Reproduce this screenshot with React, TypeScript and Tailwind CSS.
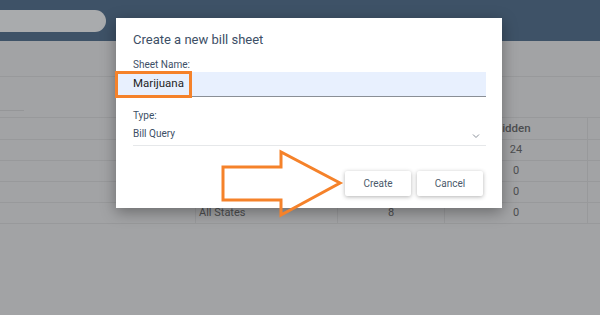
import React from 'react';

const rows = [
  { state: '', count: '', hidden: '24' },
  { state: '', count: '', hidden: '0' },
  { state: '', count: '', hidden: '0' },
  { state: 'All States', count: '8', hidden: '0' },
];

export default function App() {
  return (
    <div className="relative w-[600px] h-[315px] overflow-hidden bg-[#a2a3a5] font-['Roboto',sans-serif]">
      {/* Dimmed page behind the dialog */}
      <header className="h-[41px] bg-[#3e5267] flex items-center">
        <div className="ml-[-20px] w-[126px] h-[22px] rounded-full bg-[#a9abad]" />
      </header>
      <div className="h-[36px] border-b border-[#98999b]" />
      <div className="h-[40px] flex items-end">
        <div className="w-[24px] border-b border-[#959698] mb-[6px]" />
      </div>
      <div className="border-t border-[#98999b] text-[11px] text-[#4d4e50]">
        <div className="flex h-[22px] border-b border-[#98999b]">
          <div className="w-[195px]" />
          <div className="w-[142px] border-l border-[#98999b]" />
          <div className="w-[107px] border-l border-[#98999b]" />
          <div className="w-[143px] border-l border-[#98999b] flex items-center pl-[49px] text-[11.5px] font-medium">Hidden</div>
          <div className="flex-1 border-l border-[#98999b]" />
        </div>
        {rows.map((r, i) => (
          <div key={i} className="flex h-[21px] border-b border-[#98999b]">
            <div className="w-[195px]" />
            <div className="w-[142px] border-l border-[#98999b] flex items-center pl-[3px]">{r.state}</div>
            <div className="w-[107px] border-l border-[#98999b] flex items-center justify-center">{r.count}</div>
            <div className="w-[143px] border-l border-[#98999b] flex items-center justify-center">{r.hidden}</div>
            <div className="flex-1 border-l border-[#98999b]" />
          </div>
        ))}
      </div>

      {/* Dialog */}
      <div className="absolute left-[116px] top-[18px] w-[386px] h-[190px] bg-white shadow-[0_4px_14px_rgba(0,0,0,0.35)] text-[#3d4f66]">
        <div className="pl-[17px] pt-[14px] text-[13px] leading-[16px]">Create a new bill sheet</div>
        <div className="pl-[17px] mt-[11px] text-[10px] leading-[12px]">Sheet Name:</div>
        <div className="ml-[2px] mr-[16px] mt-[1px] h-[25px] bg-[#e8f0fe] border-b border-[#8a8f96] flex items-center pl-[15px] text-[11.5px] text-[#1f1f1f]">
          Marijuana
        </div>
        <div className="pl-[17px] mt-[13px] text-[10px] leading-[12px]">Type:</div>
        <div className="ml-[17px] mr-[16px] mt-[3px] h-[21px] border-b border-[#e6e8ea] flex items-center justify-between text-[10px]">
          <span className="mt-[-4px]">Bill Query</span>
          <svg width="8" height="6" viewBox="0 0 8 6" className="mr-[6px] mt-[2px]">
            <path d="M1 1.5 L4 4.5 L7 1.5" fill="none" stroke="#8a9099" strokeWidth="1" />
          </svg>
        </div>
        <div className="flex justify-end gap-[6px] mr-[19px] mt-[25px]">
          <button className="w-[66px] h-[25px] bg-white shadow-[0_1px_4px_rgba(0,0,0,0.3)] rounded-[2px] text-[10px] text-[#4b5a6a]">Create</button>
          <button className="w-[66px] h-[25px] bg-white shadow-[0_1px_4px_rgba(0,0,0,0.3)] rounded-[2px] text-[10px] text-[#4b5a6a]">Cancel</button>
        </div>
      </div>

      {/* Annotations */}
      <div className="absolute left-[115px] top-[71px] w-[77px] h-[27px] border-[3px] border-[#f5822a]" />
      <svg className="absolute left-0 top-0" width="600" height="315">
        <polygon
          points="223,167 281,167 281,152 340,183 281,215 281,200 223,200"
          fill="none"
          stroke="#f5822a"
          strokeWidth="3"
          strokeLinejoin="miter"
        />
      </svg>
    </div>
  );
}
